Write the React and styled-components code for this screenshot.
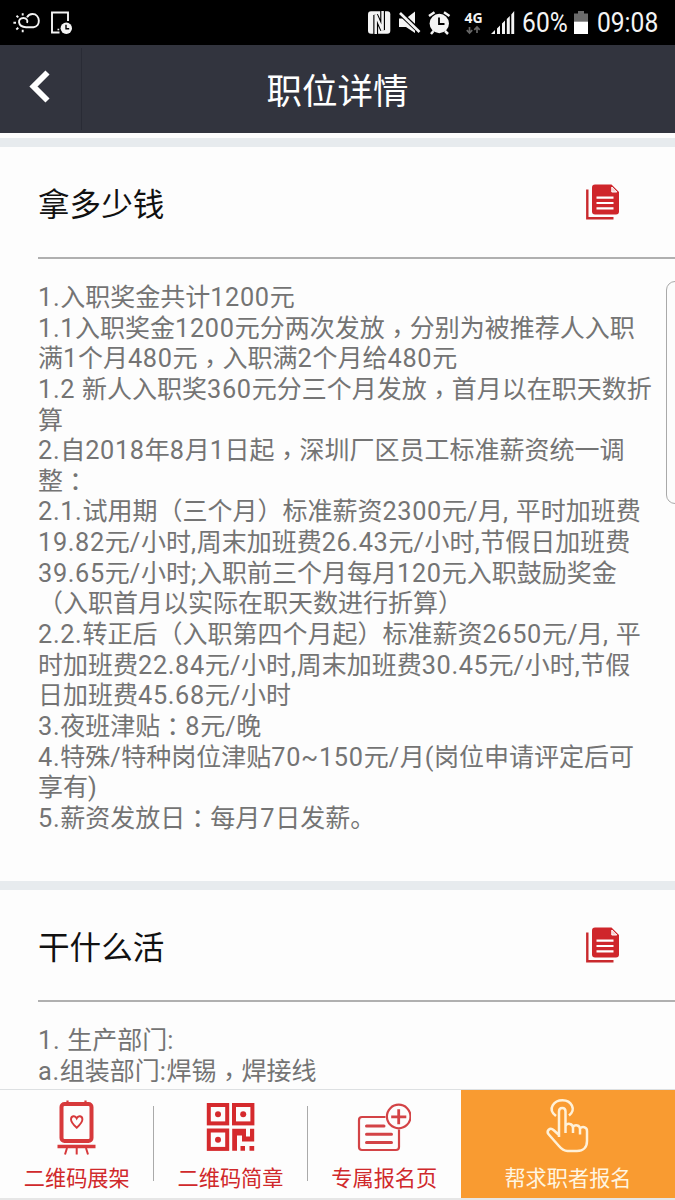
import { Fragment } from "react";
import styled, { createGlobalStyle } from "styled-components";

const GlobalStyle = createGlobalStyle`
    * {
        box-sizing: border-box;
    }
    body {
        margin: 0;
        background-color: #fdfdfd;
        font-family: Roboto, "Noto Sans CJK SC", sans-serif;
    }
    p, h1, h2 {
        margin: 0;
        font-weight: 400;
    }
    svg {
        display: block;
        flex: none;
    }
`;

const Screen = styled.div`
    position: relative;
    width: 675px;
    height: 1200px;
    overflow: hidden;
    display: flex;
    flex-direction: column;
`;

const StatusBar = styled.div`
    flex: none;
    height: 45px;
    padding: 0 17px 0 12px;
    display: flex;
    align-items: center;
    justify-content: space-between;
    background-color: #000;
    color: #f4f4f4;
`;
const StatusRight = styled.div`
    display: flex;
    align-items: center;
`;
const StatusText = styled.span`
    width: ${({ $width }) => $width}px;
    padding-top: 2px;
    font-size: 27px;
    line-height: 45px;
    white-space: nowrap;
`;
const Condensed = styled.span`
    display: inline-block;
    transform: scaleX(${({ $scale }) => $scale});
    transform-origin: left center;
`;
const BatterySlot = styled.div`
    margin: 0 9px 0 1px;
`;

const Header = styled.header`
    flex: none;
    height: 88px;
    display: grid;
    grid-template-columns: 82px 1fr 82px;
    align-items: center;
    background-color: #32343e;
`;
const BackButton = styled.button`
    height: 82px;
    padding: 0 0 5px 29px;
    border: none;
    border-right: 1px solid #292b35;
    background: transparent;
    cursor: pointer;
`;
const Title = styled.h1`
    padding-top: 6px;
    color: #fff;
    font-size: 35.5px;
    line-height: 82px;
    text-align: center;
`;

const Content = styled.main`
    flex: 1;
    min-height: 0;
    overflow: hidden;
    padding-top: 5px;
`;
const Section = styled.section`
    height: ${({ $height }) => $height}px;
    border-top: 9px solid #e7ebee;
`;
const SectionHead = styled.div`
    height: 112px;
    margin-left: 38px;
    padding-right: 55px;
    display: flex;
    align-items: center;
    justify-content: space-between;
    border-bottom: 2px solid #b0b0b0;
`;
const SectionTitle = styled.h2`
    padding-top: 7px;
    color: #111;
    font-size: 31.6px;
    line-height: 40px;
`;
const Lines = styled.div`
    padding: 24px 0 0 38px;
    color: #747474;
    font-size: 25px;
    line-height: 30.65px;
    white-space: pre;
`;
const Line = styled.p`
    height: 30.65px;
`;
const Latin = styled.span`
    font-size: 25.3px;
    line-height: 0;
    letter-spacing: 0.66px;
`;
const Mark = styled.span`
    position: relative;
    top: ${({ $drop }) => $drop}px;
    font-family: Roboto, "Noto Sans CJK TC", sans-serif;
    line-height: 0;
`;

const SideHandle = styled.div`
    position: absolute;
    top: 281px;
    right: -10px;
    width: 19px;
    height: 223px;
    border: 1px solid #a9a9a9;
    border-radius: 9px;
    background-color: #fcfcfc;
`;

const TabBar = styled.nav`
    flex: none;
    height: 111px;
    display: grid;
    grid-template-columns: 153.5px 154px 153.5px 1fr;
    border-top: 1px solid #dde0e2;
    border-bottom: 2px solid #e6e6e6;
    background-color: #fdfdfd;
`;
const Tab = styled.button`
    position: relative;
    padding: 7px 0 0;
    border: none;
    background-color: ${({ $primary }) => ($primary ? "#f99b31" : "transparent")};
    color: ${({ $primary }) => ($primary ? "#fff5e0" : "#d0292b")};
    display: flex;
    flex-direction: column;
    align-items: center;
    font-family: inherit;
    font-size: 21.2px;
    line-height: 28px;
    white-space: nowrap;
    cursor: pointer;

    &:nth-child(-n + 2)::after {
        content: "";
        position: absolute;
        top: 16px;
        right: 0;
        width: 1px;
        height: 75px;
        background-color: #aaa;
    }
`;
const TabIcon = styled.div`
    height: 68px;
`;

const moneyLines = [
    "1.入职奖金共计1200元",
    "1.1入职奖金1200元分两次发放，分别为被推荐人入职",
    "满1个月480元，入职满2个月给480元",
    "1.2 新人入职奖360元分三个月发放，首月以在职天数折",
    "算",
    "2.自2018年8月1日起，深圳厂区员工标准薪资统一调",
    "整：",
    "2.1.试用期（三个月）标准薪资2300元/月, 平时加班费",
    "19.82元/小时,周末加班费26.43元/小时,节假日加班费",
    "39.65元/小时;入职前三个月每月120元入职鼓励奖金",
    "（入职首月以实际在职天数进行折算）",
    "2.2.转正后（入职第四个月起）标准薪资2650元/月, 平",
    "时加班费22.84元/小时,周末加班费30.45元/小时,节假",
    "日加班费45.68元/小时",
    "3.夜班津贴：8元/晚",
    "4.特殊/特种岗位津贴70~150元/月(岗位申请评定后可",
    "享有)",
    "5.薪资发放日：每月7日发薪。",
];
const workLines = ["1. 生产部门:", "a.组装部门:焊锡，焊接线"];

// full-width commas and colons are centred in their cell, the comma low on the line
function renderPart(part, i) {
    if (part === "，" || part === "：") {
        return (
            <Mark key={i} lang="zh-TW" $drop={part === "，" ? 6 : 1}>
                {part}
            </Mark>
        );
    }
    if (/^[ -~]+$/.test(part)) {
        return <Latin key={i}>{part}</Latin>;
    }
    return <Fragment key={i}>{part}</Fragment>;
}

function TextLines({ lines }) {
    return (
        <Lines>
            {lines.map((line) => (
                <Line key={line}>{line.split(/([，：]|[ -~]+)/).map(renderPart)}</Line>
            ))}
        </Lines>
    );
}

function CopyIcon() {
    return (
        <svg width="34" height="36" viewBox="0 0 34 36">
            <path d="M1.3 5.5V34.3H27.5" fill="none" stroke="#c9292d" strokeWidth="2.4" />
            <path
                d="M9 .5H25.5L33 8V27.5Q33 30.5 30 30.5H9Q6 30.5 6 27.5V3.5Q6 .5 9 .5Z"
                fill="#cf262b"
            />
            <path d="M25.8 3V8H30.8Z" fill="#f3c9ca" stroke="#fff" strokeWidth="1" />
            <path d="M10.5 13.7H27.5M10.5 19H27.5M10.5 24.3H27.5" stroke="#fff" strokeWidth="2.2" />
        </svg>
    );
}

function WeatherIcons() {
    return (
        <svg width="62" height="24" viewBox="12 11 62 24" fill="none" stroke="#f4f4f4">
            <path
                d="M26 27.2H33.5C41 27 40.5 14 32.5 14C29.5 14 28 15.3 27 17.3M26 27.2C17.5 27 17 18 23.3 18C26.5 18 28.2 20.3 27 22.8"
                strokeWidth="1.9"
            />
            <path
                d="M22.7 13.2V15.6M16.5 15.7L18.3 17.4M13.4 22.8H16M16.3 29.5L18.3 27.8M22.7 29.8V32.2"
                strokeWidth="1.9"
            />
            <path d="M59.5 32.5H52V12.5H68V21" strokeWidth="1.9" />
            <circle cx="66.3" cy="28.2" r="5.7" fill="#f4f4f4" stroke="none" />
            <path d="M66 24.8V28.7H69.2" stroke="#000" strokeWidth="1.4" />
            <path d="M57.5 29.5H59.2" strokeWidth="1.6" />
        </svg>
    );
}

function SignalIcons() {
    return (
        <svg width="150" height="45" viewBox="366 0 150 45" fill="#f4f4f4">
            <rect x="368" y="11.3" width="22.3" height="22.4" rx="3" />
            <path d="M375.7 34V15L382.6 30V11" fill="none" stroke="#000" strokeWidth="4.8" />
            <path d="M375.7 34V14.5L382.6 30.5V11" fill="none" stroke="#f4f4f4" strokeWidth="2.5" />
            <path d="M399 18.5H406L415 11.5V33L406 27H399Z" />
            <path d="M399 12L420 32" stroke="#000" strokeWidth="5" />
            <path d="M400 13L419.5 32" stroke="#f4f4f4" strokeWidth="2.6" />
            <circle cx="439.3" cy="23.5" r="9.7" />
            <path
                d="M429 16L434.5 12.3M449.5 16L444 12.3M433.5 31L431 34M445 31L448 34"
                stroke="#f4f4f4"
                strokeWidth="2.5"
            />
            <path d="M439 17.5V24H444.5" fill="none" stroke="#000" strokeWidth="1.8" />
            <text x="464.5" y="22.5" fontSize="14" fontWeight="700" fontFamily="Open Sans, sans-serif">
                4G
            </text>
            <path
                d="M469.5 27V33M466.8 30.2L469.5 33L472.2 30.2M477 33V27M474.3 29.8L477 27L479.7 29.8"
                fill="none"
                stroke="#666"
                strokeWidth="1.7"
            />
            <path d="M491 34L495 30V34ZM497 28.5L500 25.5V34H497ZM502 23.5L505 20.5V34H502ZM506.8 19L509.8 16V34H506.8ZM511.3 14.5L514.2 11V34H511.3Z" />
        </svg>
    );
}

function BatteryIcon() {
    return (
        <svg width="14" height="23" viewBox="0 0 14 23">
            <path d="M0 2.5H4V0H10V2.5H14V10.5H0Z" fill="#6b6b6b" />
            <rect y="10.5" width="14" height="12.5" fill="#fff" />
        </svg>
    );
}

function StandIcon() {
    return (
        <svg width="40" height="58" viewBox="57 1098 40 58" fill="none" stroke="#d7393b">
            <rect x="61.5" y="1105" width="30" height="37" rx="3" strokeWidth="4" />
            <path d="M67.5 1101.5V1105M85.5 1101.5V1105" strokeWidth="2.2" />
            <path d="M57.5 1147.5H95.5" strokeWidth="3.5" />
            <path d="M67 1149L65 1155.5M76.7 1149V1155.5M86 1149L88 1155.5" strokeWidth="2" />
            <path
                d="M76.7 1128.7C73.5 1125.7 71 1123.5 71 1120.5C71 1116.8 75.2 1116 76.7 1119.3C78.2 1116 82.4 1116.8 82.4 1120.5C82.4 1123.5 80 1125.7 76.7 1128.7Z"
                strokeWidth="1.9"
            />
        </svg>
    );
}

function QrIcon() {
    return (
        <svg width="50" height="58" viewBox="207 1098 50 58" fill="#d52a2d">
            <g fill="none" stroke="#d52a2d" strokeWidth="4">
                <rect x="209.8" y="1106" width="18.4" height="18.4" />
                <rect x="235" y="1106" width="18.4" height="18.4" />
                <rect x="209.8" y="1131.5" width="18.4" height="18.4" />
            </g>
            <circle cx="219" cy="1115.2" r="3" />
            <circle cx="244.2" cy="1115.2" r="3" />
            <circle cx="219" cy="1140.7" r="3" />
            <path d="M233.2 1129.7H247V1137.5H251V1129.7H255.2V1142.5H243V1136.5H238V1151.7H233.2Z" />
            <path d="M241.5 1147H246V1151.7H241.5ZM250.5 1147H255.2V1151.7H250.5Z" />
        </svg>
    );
}

function FormIcon() {
    return (
        <svg width="54" height="58" viewBox="358 1098 54 58" fill="none" stroke="#d34346">
            <path
                d="M386.5 1118H363Q360 1118 360 1121V1148Q360 1151 363 1151H397Q400 1151 400 1148V1130.5"
                strokeWidth="2.2"
            />
            <path d="M367.5 1127H385M367.5 1135.3H392.5M367.5 1143.5H392.5" strokeWidth="3" strokeLinecap="round" />
            <circle cx="399.7" cy="1117.5" r="11.8" strokeWidth="2.2" />
            <path d="M399.7 1110.2V1125.3M392.2 1117.8H407.3" strokeWidth="2.8" />
        </svg>
    );
}

function TouchIcon() {
    return (
        <svg width="44" height="58" viewBox="546 1098 44 58" fill="none" stroke="#fff1d8" strokeWidth="2.5">
            <path
                d="M559 1138V1112.5C559 1107.8 565.5 1107.8 565.5 1112.5V1134M565.5 1127C567 1123.8 573 1124 573 1129V1134M573 1128C575 1125.2 580 1126 580 1130V1135.5M580 1129.5C582 1127.3 587 1127.5 587 1132V1142C587 1148.5 583 1152 577 1152H567.5C563.5 1152 561 1149.5 558.5 1146.5L548.8 1135.5C545.8 1132 550 1127.8 553.5 1131L559 1136"
                strokeLinejoin="round"
            />
            <path d="M556 1117C546.5 1109.5 554.5 1101.2 562.5 1101.2C571.5 1101.2 576.5 1110.5 569 1116.5" />
        </svg>
    );
}

const tabs = [
    { label: "二维码展架", Icon: StandIcon },
    { label: "二维码简章", Icon: QrIcon },
    { label: "专属报名页", Icon: FormIcon },
    { label: "帮求职者报名", Icon: TouchIcon, primary: true },
];

function App() {
    return (
        <>
            <GlobalStyle />
            <Screen>
                <StatusBar>
                    <WeatherIcons />
                    <StatusRight>
                        <SignalIcons />
                        <StatusText $width={57}>
                            <Condensed $scale={0.91}>&nbsp;60%</Condensed>
                        </StatusText>
                        <BatterySlot>
                            <BatteryIcon />
                        </BatterySlot>
                        <StatusText $width={61}>
                            <Condensed $scale={0.91}>09:08</Condensed>
                        </StatusText>
                    </StatusRight>
                </StatusBar>
                <Header>
                    <BackButton aria-label="back">
                        <svg width="22" height="34" viewBox="0 0 22 34">
                            <path d="M18.5 2.5L4.5 16.5L18.5 30.5" fill="none" stroke="#fff" strokeWidth="5.8" />
                        </svg>
                    </BackButton>
                    <Title>职位详情</Title>
                </Header>
                <Content>
                    <Section $height={743}>
                        <SectionHead>
                            <SectionTitle>拿多少钱</SectionTitle>
                            <CopyIcon />
                        </SectionHead>
                        <TextLines lines={moneyLines} />
                    </Section>
                    <Section $height={300}>
                        <SectionHead>
                            <SectionTitle>干什么活</SectionTitle>
                            <CopyIcon />
                        </SectionHead>
                        <TextLines lines={workLines} />
                    </Section>
                </Content>
                <TabBar>
                    {tabs.map(({ label, Icon, primary }) => (
                        <Tab key={label} $primary={primary}>
                            <TabIcon>
                                <Icon />
                            </TabIcon>
                            {label}
                        </Tab>
                    ))}
                </TabBar>
                <SideHandle />
            </Screen>
        </>
    );
}

export default App;
